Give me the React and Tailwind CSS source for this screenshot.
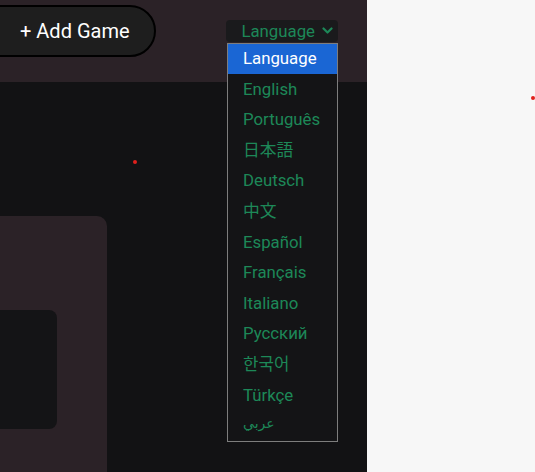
import React from "react";

const langs = ["English","Português","日本語","Deutsch","中文","Español","Français","Italiano","Русский","한국어","Türkçe"];

export default function App() {
  return (
    <div className="relative flex h-[472px] w-[535px] overflow-hidden" style={{fontFamily: 'Roboto, "Noto Sans CJK JP", "Noto Sans CJK KR", "DejaVu Sans", sans-serif'}}>
      <div className="flex w-[367px] shrink-0 flex-col bg-[#121214]">
        <div className="relative flex h-[82px] shrink-0 items-start justify-between bg-[#2b2227]">
          <button className="ml-[-25px] mt-[5px] flex h-[52px] w-[181px] items-center rounded-full border-2 border-black bg-[#1e1e1e] pl-[43px] text-[20px] text-white">
            + Add Game
          </button>
          <div className="mr-[29px] mt-[20px] flex h-[22px] w-[112px] items-center justify-end gap-[7px] rounded-[4px] bg-[#1a1a1c] pr-[5px] text-[16.8px] leading-none text-[#1d8858]">
            <span>Language</span>
            <svg width="11" height="8" viewBox="0 0 11 8" fill="none"><path d="M1.5 1.5L5.5 5.5L9.5 1.5" stroke="#1d8858" strokeWidth="2.2" strokeLinecap="round" strokeLinejoin="round"/></svg>
          </div>
        </div>
        <div className="ml-[-20px] mt-[134px] flex h-[300px] w-[127px] shrink-0 flex-col rounded-tr-[10px] bg-[#2b2227] pt-[94px]">
          <div className="h-[119px] w-[77px] rounded-r-[8px] bg-[#141416]"></div>
        </div>
      </div>
      <div className="flex-1 bg-[#f7f7f7]"></div>

      <div className="absolute left-[133px] top-[160px] h-[4px] w-[4px] rounded-full bg-[#e0201c]"></div>
      <div className="absolute left-[531px] top-[96px] h-[4px] w-[4px] rounded-full bg-[#e0201c]"></div>

      <div className="absolute left-[227px] top-[43px] flex w-[111px] flex-col border border-[#7d7d7d] bg-[#141416] text-[16.8px]">
        <div className="flex h-[30px] items-center bg-[#1a66d4] pl-[15px] text-white">Language</div>
        {langs.map((l) => (
          <div key={l} className="flex h-[30.6px] items-center pl-[15px] text-[#1d8858]">{l}</div>
        ))}
        <div className="flex h-[30.6px] items-center pb-[4px] pl-[15px] text-[14px] text-[#1d8858]">عربي</div>
      </div>
    </div>
  );
}
